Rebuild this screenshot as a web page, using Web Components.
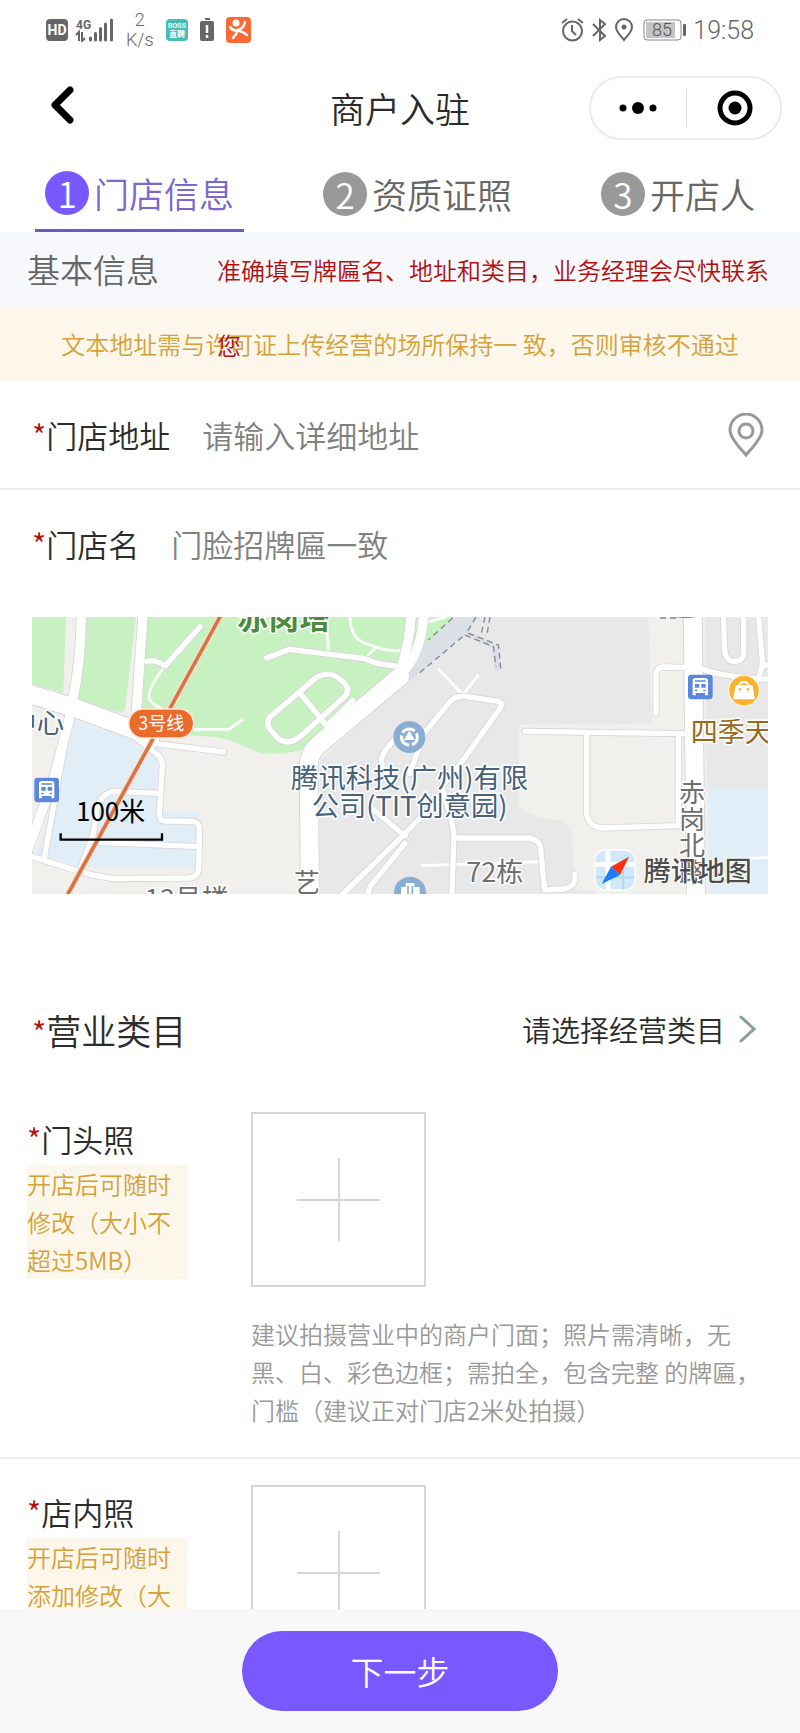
<!DOCTYPE html>
<html lang="zh-CN">

<head>
    <meta charset="utf-8">
    <meta name="viewport" content="width=device-width, initial-scale=1">
    <title>商户入驻</title>
    <style>
        body {
            margin: 0;
            height: 100vh;
            display: flex;
            flex-direction: column;
            background: #fff;
            color: #2b2b2b;
            font-family: "Noto Sans CJK SC", sans-serif;
            font-weight: 350;
            --red: #b30f0f;
            --gold: #d3a13a;
            --cream: #fdf6ea;
            --purple: #7859ff;
            --line: #ececec;
        }

        main {
            flex: 1;
            min-height: 0;
            overflow-y: auto;
            scrollbar-width: none;
        }
    </style>
</head>

<body>

    <status-bar></status-bar>
    <nav-bar>商户入驻</nav-bar>
    <step-tabs>
        <step-tab num="1" active>门店信息</step-tab>
        <step-tab num="2">资质证照</step-tab>
        <step-tab num="3">开店人</step-tab>
    </step-tabs>
    <main>
        <section-head>基本信息<span slot="hint">准确填写牌匾名、地址和类目，业务经理会尽快联系您</span></section-head>
        <notice-bar>文本地址需与许可证上传经营的场所保持一 致，否则审核不通过</notice-bar>
        <form-field label="门店地址" placeholder="请输入详细地址" line>
            <svg slot="icon" width="36" height="44" viewBox="0 0 36 44" fill="none" stroke="#999" stroke-width="3">
                <path d="M18 42C14 37 2 26 2 17a16 16 0 0 1 32 0C34 26 22 37 18 42z" />
                <circle cx="18" cy="18" r="7" />
            </svg>
        </form-field>
        <form-field label="门店名" placeholder="门脸招牌匾一致"></form-field>
        <shop-map></shop-map>
        <category-picker label="营业类目">请选择经营类目</category-picker>
        <photo-upload label="门头照">
            <span slot="tip">开店后可随时修改（大小不超过5MB）</span>
            <span slot="desc">建议拍摄营业中的商户门面；照片需清晰，无黑、白、彩色边框；需拍全，包含完整 的牌匾，门槛（建议正对门店2米处拍摄）</span>
        </photo-upload>
        <photo-upload label="店内照">
            <span slot="tip">开店后可随时添加修改（大</span>
        </photo-upload>
    </main>
    <bottom-bar>下一步</bottom-bar>

    <script>
        // 手机状态栏
        class StatusBar extends HTMLElement {
            constructor() {
                super();
                const shadow = this.attachShadow({ mode: 'open' });
                shadow.innerHTML = `
                    <style>
                        :host {
                            display: flex;
                            justify-content: space-between;
                            align-items: center;
                            height: 60px;
                            padding: 0 46px;
                            color: #666;
                            font-family: Roboto, sans-serif;
                            flex: none;
                        }
                        div { display: flex; align-items: center; }
                        .left { gap: 12px; }
                        .right { gap: 7px; }
                        .speed { font-size: 18px; line-height: 20px; text-align: center; }
                        .time { font-size: 25px; }
                        svg { display: block; flex: none; }
                    </style>
                    <div class="left">
                        <svg width="68" height="24" viewBox="0 0 68 24" fill="#666">
                            <rect y="1" width="22" height="22" rx="4" />
                            <text x="11" y="17" font-size="14" font-weight="700" fill="#fff" text-anchor="middle">HD</text>
                            <text x="30" y="11" font-size="12" font-weight="700">4G</text>
                            <path d="M30 17l3-3v9M36 14v9l3-3" fill="none" stroke="#666" stroke-width="2" />
                            <path d="M44.500 20v2M49.500 15.500v6.500M54.500 10.500v11.500M59.500 6v16M65.500 2v20" stroke="#666" stroke-width="3" stroke-linecap="round" />
                        </svg>
                        <span class="speed">2<br>K/s</span>
                        <svg width="22" height="24" viewBox="0 0 22 24">
                            <rect y="1" width="22" height="22" rx="4" fill="#45bdb5" />
                            <text x="11" y="10" font-size="7" font-weight="700" fill="#fff" text-anchor="middle">BOSS</text>
                            <text x="11" y="19" font-size="8" font-weight="700" fill="#fff" text-anchor="middle" font-family="Noto Sans CJK SC">直聘</text>
                        </svg>
                        <svg width="14" height="24" viewBox="0 0 14 24">
                            <path d="M5 0h5v2H5zM2 3h10a2 2 0 0 1 2 2v16a2 2 0 0 1-2 2H2a2 2 0 0 1-2-2V5a2 2 0 0 1 2-2z" fill="#666" />
                            <path d="M7 7v8M7 17v3" stroke="#fff" stroke-width="2.500" />
                        </svg>
                        <svg width="25" height="26" viewBox="0 0 25 26">
                            <rect width="25" height="26" rx="4" fill="#fb6a34" />
                            <circle cx="10" cy="6" r="3.500" fill="#fff" />
                            <path d="M4 10c2 3 5 4 8 3 4-1 6-3 7-8M11 13c1 3-2 5-4 8M13 14c2 1 3 0 8 4" fill="none" stroke="#fff" stroke-width="2.500" stroke-linecap="round" />
                        </svg>
                    </div>
                    <div class="right">
                        <svg width="23" height="24" viewBox="0 0 23 24" fill="none" stroke="#666" stroke-width="2">
                            <circle cx="11.500" cy="13" r="9.500" />
                            <path d="M11 7v6l4 4M1 5l5-4M22 5l-5-4" />
                        </svg>
                        <svg width="16" height="24" viewBox="0 0 16 24" fill="none" stroke="#666" stroke-width="2">
                            <path d="M2 6l12 12-5 4V2l5 4L2 18" />
                        </svg>
                        <svg width="20" height="24" viewBox="0 0 20 24" fill="none" stroke="#666" stroke-width="2">
                            <path d="M10 22C7 18 2 14 2 9a8 8 0 0 1 16 0c0 5-5 9-8 13z" />
                            <circle cx="10" cy="9" r="1.500" fill="#666" />
                        </svg>
                        <svg width="45" height="24" viewBox="0 0 45 24">
                            <rect x="3" y="2" width="37" height="20" rx="3" fill="none" stroke="#888" />
                            <rect x="5" y="4" width="29" height="16" fill="#c4c4c4" />
                            <rect x="42" y="6" width="3" height="12" rx="1" fill="#666" />
                            <text x="21" y="18" font-size="18" fill="#555" text-anchor="middle">85</text>
                        </svg>
                        <span class="time">19:58</span>
                    </div>
                `;
            }
        }
        customElements.define('status-bar', StatusBar);

        // 标题栏 + 右上角胶囊
        class NavBar extends HTMLElement {
            constructor() {
                super();
                const shadow = this.attachShadow({ mode: 'open' });
                shadow.innerHTML = `
                    <style>
                        :host {
                            display: grid;
                            grid-template-columns: 1fr auto 1fr;
                            align-items: center;
                            height: 96px;
                            padding: 0 18px;
                            flex: none;
                        }
                        h1 { margin: 0; font-size: 35px; line-height: 52px; font-weight: inherit; }
                        button { border: 0; background: none; padding: 0; }
                        svg { display: block; }
                        .back { justify-self: start; padding: 0 32px 6px; }
                        .capsule {
                            justify-self: end;
                            box-sizing: border-box;
                            width: 193px;
                            height: 64px;
                            border: 2px solid #ebebeb;
                            border-radius: 32px;
                            display: grid;
                            grid-template-columns: 1fr 1fr;
                            align-items: center;
                        }
                        .capsule button { display: grid; place-items: center; height: 38px; }
                        .capsule button + button { border-left: 1px solid #ddd; padding-left: 4px; }
                    </style>
                    <button class="back" aria-label="返回">
                        <svg width="24" height="38" viewBox="0 0 24 38" fill="none" stroke="#000" stroke-width="7" stroke-linecap="round" stroke-linejoin="round">
                            <path d="M20 4L5 19l15 15" />
                        </svg>
                    </button>
                    <h1><slot></slot></h1>
                    <div class="capsule">
                        <button aria-label="更多">
                            <svg width="38" height="12" viewBox="0 0 38 12">
                                <circle cx="4" cy="6" r="3.500" /><circle cx="19" cy="6" r="6" /><circle cx="34" cy="6" r="3.500" />
                            </svg>
                        </button>
                        <button aria-label="关闭">
                            <svg width="36" height="36" viewBox="0 0 36 36">
                                <circle cx="18" cy="18" r="15" fill="none" stroke="#000" stroke-width="5" />
                                <circle cx="18" cy="18" r="6.500" />
                            </svg>
                        </button>
                    </div>
                `;
            }
        }
        customElements.define('nav-bar', NavBar);

        class StepTabs extends HTMLElement {
            constructor() {
                super();
                const shadow = this.attachShadow({ mode: 'open' });
                shadow.innerHTML = `
                    <style>
                        :host {
                            display: flex;
                            justify-content: space-between;
                            height: 76px;
                            padding: 0 35px;
                            flex: none;
                        }
                    </style>
                    <slot></slot>
                `;
            }
        }
        customElements.define('step-tabs', StepTabs);

        class StepTab extends HTMLElement {
            constructor() {
                super();
                const shadow = this.attachShadow({ mode: 'open' });
                shadow.innerHTML = `
                    <style>
                        :host { display: flex; color: #666; --dot: #999; }
                        :host([active]) { color: #7b68cc; --dot: var(--purple); border-bottom: 3px solid #7158bd; }
                        button {
                            display: flex;
                            align-items: center;
                            gap: 5px;
                            padding: 0 10px;
                            border: 0;
                            background: none;
                            color: inherit;
                            font: inherit;
                            font-size: 35px;
                            line-height: 44px;
                        }
                        .num { width: 44px; height: 44px; border-radius: 50%; background: var(--dot); color: #fff; }
                    </style>
                    <button><span class="num">${this.getAttribute('num')}</span><slot></slot></button>
                `;
            }
        }
        customElements.define('step-tab', StepTab);

        // 提示文字换行后会压在下面的黄条上
        class SectionHead extends HTMLElement {
            constructor() {
                super();
                const shadow = this.attachShadow({ mode: 'open' });
                shadow.innerHTML = `
                    <style>
                        :host {
                            display: flex;
                            gap: 58px;
                            height: 75px;
                            padding: 0 16px 0 27px;
                            background: #f7f8fc;
                            color: #666;
                            line-height: 75px;
                            position: relative;
                            z-index: 1;
                        }
                        h2 { margin: 0; font-size: 33px; font-weight: inherit; white-space: nowrap; }
                        .hint { flex: 1; font-size: 24px; color: var(--red); }
                    </style>
                    <h2><slot></slot></h2>
                    <div class="hint"><slot name="hint"></slot></div>
                `;
            }
        }
        customElements.define('section-head', SectionHead);

        class NoticeBar extends HTMLElement {
            constructor() {
                super();
                const shadow = this.attachShadow({ mode: 'open' });
                shadow.innerHTML = `
                    <style>
                        :host {
                            display: block;
                            background: var(--cream);
                            color: var(--gold);
                            font-size: 24px;
                            line-height: 74px;
                            text-align: center;
                        }
                    </style>
                    <slot></slot>
                `;
            }
        }
        customElements.define('notice-bar', NoticeBar);

        class FormField extends HTMLElement {
            constructor() {
                super();
                const shadow = this.attachShadow({ mode: 'open' });
                shadow.innerHTML = `
                    <style>
                        :host {
                            display: flex;
                            align-items: center;
                            height: 107px;
                            padding: 0 36px 0 32px;
                            font-size: 31px;
                        }
                        :host([line]) { border-bottom: 2px solid var(--line); }
                        i { font-style: normal; color: var(--red); }
                        input {
                            flex: 1;
                            min-width: 0;
                            margin-left: 32px;
                            padding: 0;
                            border: 0;
                            outline: 0;
                            background: none;
                            font: inherit;
                            color: inherit;
                        }
                        input::placeholder { color: #808080; }
                    </style>
                    <label for="field"><i>*</i>${this.getAttribute('label')}</label>
                    <input id="field" type="text" placeholder="${this.getAttribute('placeholder')}">
                    <slot name="icon"></slot>
                `;
            }
        }
        customElements.define('form-field', FormField);

        // 地图，坐标按 3 倍图绘制
        class ShopMap extends HTMLElement {
            constructor() {
                super();
                const shadow = this.attachShadow({ mode: 'open' });
                shadow.innerHTML = `
                    <style>
                        :host { display: block; margin: 20px 32px 78px; font-weight: 400; }
                        svg { display: block; width: 100%; height: auto; }
                        text { paint-order: stroke; stroke: #fff; stroke-width: 9px; stroke-linejoin: round; font-size: 78px; fill: #6e6e6e; }
                        .poi { fill: #48617b; font-size: 82px; }
                        .plain { stroke: none; }
                    </style>
                    <svg viewBox="96 51 2208 831" role="img" aria-label="门店位置地图">
                        <defs>
                            <g id="wide">
                                <path d="M60 273L230 326L410 392L450 420" />
                                <path d="M930 900L926 500Q926 460 955 435L1200 230" />
                                <path d="M2078 30L2088 900" />
                            </g>
                            <g id="mid">
                                <path d="M244 30Q244 180 218 300L205 370L160 540L96 715L80 760" />
                                <path d="M430 30L408 350" />
                                <path d="M1234 30Q1232 120 1200 215" />
                                <path d="M1272 30Q1268 130 1230 190L1190 240" />
                            </g>
                            <g id="thin">
                                <path d="M600 80L495 198Q470 178 440 184" />
                                <path d="M800 174L868 148L1095 176L1130 190L1200 200" />
                                <path d="M950 232Q990 210 1020 238Q1055 262 1036 288L900 410Q865 438 835 416L808 386Q795 360 818 344L950 232" />
                                <path d="M905 285L980 378L1058 302" />
                                <path d="M410 415L470 462Q488 475 487 500L478 645Q478 662 495 663L580 664Q598 665 598 690L596 810Q592 832 565 834L340 836Q290 830 240 815L96 770" />
                                <path d="M480 580L345 574Q310 575 292 620L280 700L240 810" />
                                <path d="M292 727L598 740" />
                                <path d="M462 430L672 456" />
                                <path d="M205 370L132 780" />
                                <path d="M1575 394L2055 401" />
                                <path d="M1760 400L1760 640Q1765 680 1805 684L2040 677" />
                                <path d="M2035 405L2035 675" />
                                <path d="M1968 340L1968 225Q1970 202 1990 201L2055 202" />
                                <path d="M2170 40L2174 150Q2178 184 2202 184Q2232 184 2231 155L2231 40" />
                                <path d="M2275 40L2288 195L2275 235M2285 195L2330 195M2110 208Q2180 235 2320 238" />
                                <path d="M1180 560Q1140 500 1145 475Q1150 450 1220 380M1230 520L1272 400L1350 305Q1365 285 1400 290L1495 304Q1510 308 1500 325L1375 500L1325 560L1350 640L1362 700L1355 900" />
                                <path d="M1325 590L1215 700L1010 900M1110 620L1215 708M1215 730L1110 860L1100 900" />
                                <path d="M1362 714L1588 714Q1618 718 1622 745L1634 870L1690 867Q1732 860 1724 822" />
                            </g>
                            <g id="bus">
                                <rect width="74" height="74" rx="10" fill="#5b87de" />
                                <path d="M22 10h30q8 0 8 8v44h-9v-7H23v7h-9V18q0-8 8-8z" fill="#fff" />
                                <path d="M21 17h32v4H21zM21 28h13v11H21zM40 28h13v11H40zM21 45h7v5h-7zM46 45h7v5h-7z" fill="#5b87de" />
                            </g>
                        </defs>
                        <rect x="96" y="51" width="2208" height="840" fill="#f1f0ed" />
                        <g fill="#c8f1c2">
                            <path d="M96 51H198L190 280L96 252z" />
                            <path d="M256 51H408L375 330Q370 342 355 336L232 300z" />
                            <path d="M443 51H1362L1240 175L930 440Q860 470 780 458Q740 445 700 424Q650 408 590 408L480 390L415 330z" />
                        </g>
                        <path d="M1360 51H1945L1955 370L1558 375L1556 620Q1600 655 1690 662L1715 700L1725 870H1785V900H960V480L1200 260z" fill="#e8e8e8" />
                        <path d="M2115 51H2304V570H2120z" fill="#e8e8e8" />
                        <path d="M2125 565H2304V890H2125z" fill="#e1edf7" />
                        <path d="M225 365L410 420L490 440V633H596V804H260L110 765z" fill="#e1edf7" />
                        <path d="M1362 51H1440L1405 92L1500 140L1504 210L1484 214L1478 145L1390 105L1248 228L1200 260L1260 150z" fill="#dcdfe5" />
                        <g fill="none" stroke="#7f8797" stroke-width="4" stroke-dasharray="18 12">
                            <path d="M1358 54L1285 120M1428 51L1400 98L1495 135L1502 205M1395 105L1480 140L1488 200M1388 110L1250 226M1455 51L1443 105M1470 51L1460 108M1980 54h50" />
                        </g>
                        <g fill="none" stroke="#fff" stroke-width="8">
                            <path d="M495 198Q435 275 450 300T530 340M582 388H688L730 356M980 90L986 150M1050 51Q1050 120 1110 135Q1160 155 1200 152M1125 145L1098 172M1200 150L1240 135" />
                            <path d="M1315 206L1388 285L1436 224M1264 797L1620 785M2250 775L2304 772M1250 75L1340 51" />
                        </g>
                        <g fill="none" stroke-linecap="round" stroke-linejoin="round">
                            <use href="#thin" stroke="#d6d6d6" stroke-width="21" />
                            <use href="#mid" stroke="#d6d6d6" stroke-width="33" />
                            <use href="#wide" stroke="#d6d6d6" stroke-width="60" />
                            <use href="#thin" stroke="#fff" stroke-width="16" />
                            <use href="#mid" stroke="#fff" stroke-width="28" />
                            <use href="#wide" stroke="#fff" stroke-width="54" />
                            <path d="M660 51L510 325M458 418L202 885" stroke="#fbe3cf" stroke-width="18" />
                            <path d="M662 47L510 325M458 418L202 885" stroke="#d97447" stroke-width="11" />
                        </g>
                        <rect x="386" y="327" width="195" height="87" rx="43" fill="#eb6b2d" stroke="#fde6d6" stroke-width="5" />
                        <text class="plain" x="484" y="390" text-anchor="middle" style="font-size: 54px; fill: #fff">3号线</text>
                        <text x="712" y="86" style="font-size: 93px; font-weight: 700; fill: #4c8a3e">赤岗塔</text>
                        <text class="poi" x="28" y="400">中心</text>
                        <use href="#bus" x="103" y="533" />
                        <use href="#bus" x="2064" y="224" />
                        <path d="M2025 45h65v6q-32 6-65 0z" fill="#4f7fc0" />
                        <circle cx="1228" cy="411" r="48" fill="#8aaed2" />
                        <circle cx="1228" cy="411" r="24" fill="none" stroke="#fff" stroke-width="9" stroke-dasharray="42 8" stroke-dashoffset="12" />
                        <path d="M1228 392l17 28h-34z" fill="#fff" />
                        <circle cx="1230" cy="878" r="48" fill="#8aaed2" />
                        <path d="M1203 885v-24h14v-12h26v12h16v24z" fill="#fff" />
                        <path d="M1224 858v27M1237 858v27" stroke="#8aaed2" stroke-width="5" />
                        <circle cx="2232" cy="272" r="46" fill="#fbb12c" stroke="#fff4d8" stroke-width="4" />
                        <path d="M2208 258h48l6 38h-60z" fill="#fff" stroke="#fff" stroke-width="4" stroke-linejoin="round" />
                        <path d="M2218 260q0-14 14-14t14 14" fill="none" stroke="#fff" stroke-width="6" />
                        <circle cx="2220" cy="268" r="4" fill="#fbb12c" /><circle cx="2244" cy="268" r="4" fill="#fbb12c" />
                        <text class="poi" x="1229" y="565" text-anchor="middle">腾讯科技(广州)有限</text>
                        <text class="poi" x="1229" y="649" text-anchor="middle">公司(TIT创意园)</text>
                        <text x="2072" y="427" style="font-size: 81px; fill: #96691c">四季天</text>
                        <text x="882" y="876">艺</text>
                        <text x="434" y="926" style="font-size: 81px">13号楼</text>
                        <text x="1399" y="845" style="font-size: 81px">72栋</text>
                        <text x="2037" y="606">赤</text>
                        <text x="2037" y="686">岗</text>
                        <text x="2037" y="766">北</text>
                        <text x="2037" y="846">路</text>
                        <text class="plain" x="228" y="662" style="fill: #000">100米</text>
                        <path d="M182 700V719H486V700" fill="none" stroke="#000" stroke-width="7" />
                        <rect x="1785" y="750" width="120" height="120" rx="30" fill="#d0e8f9" stroke="#fff" stroke-width="4" />
                        <path d="M1824 752v116M1787 793h116" stroke="#fff" stroke-width="14" />
                        <path d="M1870 800v68M1790 832h112" stroke="#a9d8ee" stroke-width="5" />
                        <path d="M1887 770L1833 800L1860 825z" fill="#f5330c" />
                        <path d="M1805 852L1833 800L1860 825z" fill="#1c7dfc" />
                        <text x="1931" y="844" style="font-size: 81px; font-weight: 500; fill: #4d4d4d; stroke-width: 5px">腾讯地图</text>
                    </svg>
                `;
            }
        }
        customElements.define('shop-map', ShopMap);

        class CategoryPicker extends HTMLElement {
            constructor() {
                super();
                const shadow = this.attachShadow({ mode: 'open' });
                shadow.innerHTML = `
                    <style>
                        :host {
                            display: flex;
                            align-items: center;
                            height: 114px;
                            padding: 0 44px 0 32px;
                        }
                        label { flex: 1; font-size: 35px; }
                        i { font-style: normal; font-size: 31px; color: var(--red); }
                        select {
                            appearance: none;
                            border: 0;
                            padding: 0;
                            margin-right: 13px;
                            background: none;
                            font: inherit;
                            font-size: 29px;
                            color: inherit;
                        }
                    </style>
                    <label for="category"><i>*</i>${this.getAttribute('label')}</label>
                    <select id="category"><option>${this.textContent}</option></select>
                    <svg width="17" height="28" viewBox="0 0 17 28" fill="none" stroke="#8a9ba6" stroke-width="3" stroke-linecap="round">
                        <path d="M2 2l13 12L2 26" />
                    </svg>
                `;
            }
        }
        customElements.define('category-picker', CategoryPicker);

        class PhotoUpload extends HTMLElement {
            constructor() {
                super();
                const shadow = this.attachShadow({ mode: 'open' });
                shadow.innerHTML = `
                    <style>
                        :host {
                            display: grid;
                            grid-template-columns: 160px 1fr;
                            column-gap: 64px;
                            align-items: start;
                            padding: 26px 27px 28px;
                            border-bottom: 2px solid var(--line);
                            font-size: 24px;
                            line-height: 38px;
                        }
                        label { display: block; font-size: 31px; line-height: 53px; }
                        i { font-style: normal; color: var(--red); }
                        .tip { background: var(--cream); color: var(--gold); }
                        .desc { margin-top: 28px; color: #999; }
                        button {
                            display: grid;
                            place-items: center;
                            width: 175px;
                            height: 175px;
                            padding: 0;
                            border: 2px solid #d6d6d6;
                            background: none;
                        }
                    </style>
                    <div>
                        <label for="pick"><i>*</i>${this.getAttribute('label')}</label>
                        <div class="tip"><slot name="tip"></slot></div>
                    </div>
                    <div>
                        <button id="pick">
                            <svg width="83" height="83" viewBox="0 0 83 83" stroke="#d6d6d6" stroke-width="2"><path d="M42 0v83M0 42h83" /></svg>
                        </button>
                        <div class="desc"><slot name="desc"></slot></div>
                    </div>
                `;
            }
        }
        customElements.define('photo-upload', PhotoUpload);

        class BottomBar extends HTMLElement {
            constructor() {
                super();
                const shadow = this.attachShadow({ mode: 'open' });
                shadow.innerHTML = `
                    <style>
                        :host {
                            display: flex;
                            justify-content: center;
                            padding: 22px 0;
                            background: #f8f8f8;
                            flex: none;
                        }
                        button {
                            width: 316px;
                            height: 80px;
                            border: 0;
                            border-radius: 40px;
                            background: var(--purple);
                            color: #fff;
                            font: inherit;
                            font-size: 33px;
                        }
                    </style>
                    <button><slot></slot></button>
                `;
            }
        }
        customElements.define('bottom-bar', BottomBar);
    </script>

</body>

</html>
